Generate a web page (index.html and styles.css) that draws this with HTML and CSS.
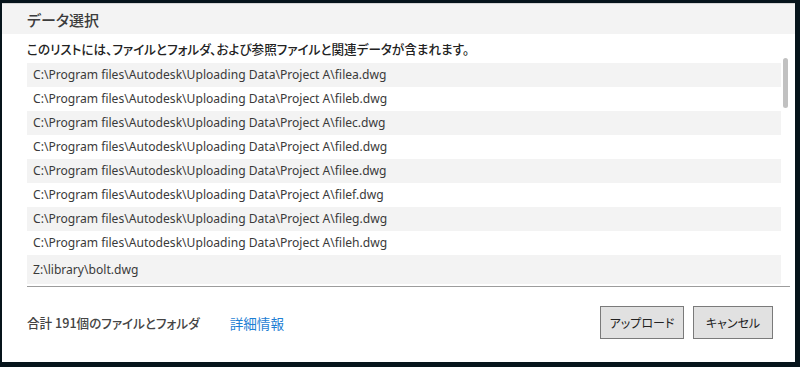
FILE: index.html
```
<!DOCTYPE html>
<html>
<head>
  <title>データ選択</title>
  <meta charset="UTF-8">
  <link rel="stylesheet" href="styles.css">
</head>
<body>
  <div class="dialog">
    <div class="dialog-header">
      <h1>データ選択</h1>
    </div>
    <p class="description">このリストには、ファイルとフォルダ、および参照ファイルと関連データが含まれます。</p>
    <div class="file-list">
      <ul class="rows">
        <li>C:\Program files\Autodesk\Uploading Data\Project A\filea.dwg</li>
        <li>C:\Program files\Autodesk\Uploading Data\Project A\fileb.dwg</li>
        <li>C:\Program files\Autodesk\Uploading Data\Project A\filec.dwg</li>
        <li>C:\Program files\Autodesk\Uploading Data\Project A\filed.dwg</li>
        <li>C:\Program files\Autodesk\Uploading Data\Project A\filee.dwg</li>
        <li>C:\Program files\Autodesk\Uploading Data\Project A\filef.dwg</li>
        <li>C:\Program files\Autodesk\Uploading Data\Project A\fileg.dwg</li>
        <li>C:\Program files\Autodesk\Uploading Data\Project A\fileh.dwg</li>
        <li class="last">Z:\library\bolt.dwg</li>
      </ul>
      <div class="scroll-track">
        <div class="scroll-thumb"></div>
      </div>
    </div>
    <div class="dialog-footer">
      <span class="total">合計 191個のファイルとフォルダ</span>
      <a class="details" href="#">詳細情報</a>
      <div class="buttons">
        <button id="uploadBtn">アップロード</button>
        <button id="cancelBtn">キャンセル</button>
      </div>
    </div>
  </div>
</body>
</html>
```

FILE: styles.css
```
* {
  margin: 0;
  padding: 0;
  box-sizing: border-box;
}

html, body {
  height: 100%;
}

body {
  font-family: 'Noto Sans', 'Noto Sans CJK JP', sans-serif;
  background: #06141b;
  color: #333333;
  padding: 3px 5px 5px 2px;
}

.dialog {
  background: #ffffff;
  height: 100%;
  display: flex;
  flex-direction: column;
}

.dialog-header {
  height: 31px;
  border-top: 1px solid #d6d6d6;
  background: #f3f3f3;
  padding-left: 25px;
  display: flex;
  align-items: center;
}

.dialog-header h1 {
  font-family: 'Noto Sans CJK JP', sans-serif;
  font-size: 15px;
  font-weight: 500;
  color: #3c3c3c;
  font-feature-settings: "palt";
}

.description {
  height: 29px;
  padding-left: 25px;
  display: flex;
  align-items: center;
  font-family: 'Noto Sans CJK JP', sans-serif;
  font-size: 12.6px;
  font-weight: 500;
  color: #222222;
  font-feature-settings: "palt";
}

.file-list {
  display: flex;
  margin-left: 25px;
  margin-right: 5px;
  border-bottom: 1px solid #9c9c9c;
  padding-bottom: 2px;
}

.rows {
  list-style: none;
  flex: 1;
}

.rows li {
  height: 24px;
  line-height: 24px;
  padding-left: 6px;
  font-size: 12.1px;
  color: #3a3a3a;
  white-space: nowrap;
}

.rows li:nth-child(odd) {
  background: #f3f3f3;
}

.rows li.last {
  height: 29px;
  line-height: 29px;
}

.scroll-track {
  width: 9px;
  margin-top: -5px;
  display: flex;
  justify-content: center;
}

.scroll-thumb {
  width: 5px;
  height: 50px;
  border-radius: 3px;
  background: #c1c1c1;
}

.dialog-footer {
  flex: 1;
  display: flex;
  align-items: center;
  padding: 0 22px 4px 25px;
}

.total {
  font-family: 'Noto Sans CJK JP', sans-serif;
  font-size: 12.6px;
  font-weight: 500;
  color: #444444;
  font-feature-settings: "palt";
}

.details {
  margin-left: 30px;
  font-family: 'Noto Sans CJK JP', sans-serif;
  font-size: 13.6px;
  color: #1f7fd4;
  text-decoration: none;
}

.buttons {
  margin-left: auto;
  display: flex;
  gap: 9px;
}

.buttons button {
  height: 33px;
  background: #e1e1e1;
  border: 1px solid #7a7a7a;
  font-family: 'Noto Sans CJK JP', sans-serif;
  font-size: 12px;
  color: #222222;
  font-feature-settings: "palt";
}

#uploadBtn {
  width: 84px;
}

#cancelBtn {
  width: 80px;
}
```
